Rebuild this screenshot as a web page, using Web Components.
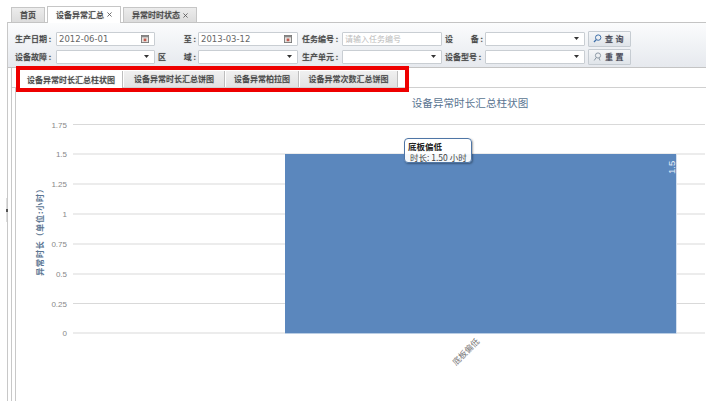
<!DOCTYPE html>
<html lang="zh">
<head>
<meta charset="utf-8">
<title>设备异常汇总</title>
<style>
    html, body { margin: 0; padding: 0; background: #fff; overflow: hidden; }
    body { font-family: "Noto Sans CJK SC", "Liberation Sans", sans-serif; font-size: 8px; color: #444; }
</style>
</head>
<body>
<app-shell>
    <top-tabs slot="tabs">
        <top-tab>首页</top-tab>
        <top-tab active closable>设备异常汇总</top-tab>
        <top-tab closable>异常时时状态</top-tab>
    </top-tabs>
    <query-bar slot="query"></query-bar>
    <chart-tabs slot="chart-tabs">
        <chart-tab active style="width:103px">设备异常时长汇总柱状图</chart-tab>
        <chart-tab style="width:101px">设备异常时长汇总饼图</chart-tab>
        <chart-tab style="width:73px">设备异常柏拉图</chart-tab>
        <chart-tab style="width:98px">设备异常次数汇总饼图</chart-tab>
    </chart-tabs>
    <bar-chart slot="chart"></bar-chart>
</app-shell>

<script>
const CJK = '"Noto Sans CJK SC", "Liberation Sans", sans-serif';
// the source shot is a downscaled one, so small text looks heavy and soft
const SOFT = "text-shadow: 0 0 1px rgba(60,60,60,.55);";

class AppShell extends HTMLElement {
    constructor() {
        super();
        this.attachShadow({ mode: "open" }).innerHTML = `
        <style>
            :host { display: block; position: relative; width: 710px; height: 401px; box-sizing: border-box; padding: 6px 4px 0 7px; overflow: hidden; }
            .panel { height: 379px; border-left: 1.5px solid #c8c8c8; display: flex; flex-direction: column; }
            .inner { flex: 1; margin-left: 3px; border-left: 1.5px solid #c8c8c8; display: flex; flex-direction: column; min-height: 0; }
            .body { flex: 1; margin-left: 3px; border-left: 1.5px solid #c8c8c8; min-height: 0; }
            /* splitter handle */
            .grip { position: absolute; left: 6px; top: 198px; width: 1px; height: 24px; background: #ddd; }
            .grip::after { content: ""; position: absolute; left: 0; top: 11px; width: 2px; height: 3px; background: #555; }
        </style>
        <slot name="tabs"></slot>
        <div class="panel">
            <slot name="query"></slot>
            <div class="inner">
                <slot name="chart-tabs"></slot>
                <div class="body"><slot name="chart"></slot></div>
            </div>
        </div>
        <div class="grip"></div>`;
    }
}

class TopTabs extends HTMLElement {
    constructor() {
        super();
        this.attachShadow({ mode: "open" }).innerHTML = `
        <style>
            :host { display: flex; height: 16px; gap: 2px; padding-left: 4px; position: relative; z-index: 1; align-items: flex-end; }
        </style>
        <slot></slot>`;
    }
}

class TopTab extends HTMLElement {
    constructor() {
        super();
        this.attachShadow({ mode: "open" }).innerHTML = `
        <style>
            :host { display: flex; box-sizing: border-box; height: 15px; padding: 0 8px; align-items: center; gap: 3px;
                border: 1px solid #c6c6c6; border-bottom: 0; background: linear-gradient(#ececec, #dcdcdc);
                font: 500 8px/1 ${CJK}; color: #444; white-space: nowrap; ${SOFT} }
            :host([active]) { height: 17px; background: #fff; margin-bottom: -1px; padding-bottom: 1px; }
            .x { display: none; width: 5px; height: 5px; }
            :host([closable]) .x { display: block; }
        </style>
        <slot></slot>
        <svg class="x" viewBox="0 0 6 6"><path d="M.5 .5l5 5M5.5 .5l-5 5" stroke="#555" stroke-width="1" fill="none"/></svg>`;
    }
}

class QueryField extends HTMLElement {
    constructor() {
        super();
        const kind = this.getAttribute("kind") || "text";
        const value = this.getAttribute("value") || "";
        const hint = this.getAttribute("hint") || "";
        let tail = "";
        if (kind === "date") {
            tail = `<svg width="8" height="8" viewBox="0 0 9 9"><rect x=".5" y=".5" width="8" height="8" fill="#e8e4e0" stroke="#777"/><rect x="1" y="1" width="7" height="1.6" fill="#8a8a8a"/><rect x="3" y="4" width="3" height="3" fill="#c05a50"/></svg>`;
        } else if (kind === "select") {
            tail = `<svg width="5" height="3" viewBox="0 0 5 3"><path d="M0 0h5L2.5 3z" fill="#333"/></svg>`;
        }
        this.attachShadow({ mode: "open" }).innerHTML = `
        <style>
            :host { display: flex; box-sizing: border-box; height: 14px; align-items: center; justify-content: space-between;
                padding: 0 5px 0 2px; background: #fff; border: 1px solid #c9ced3; border-radius: 1px; }
            .v { font: 8.5px "DejaVu Sans", sans-serif; color: #666; white-space: nowrap; }
            .h { font: 8px ${CJK}; color: #bbb; white-space: nowrap; }
            svg { display: block; }
        </style>
        <span class="${hint ? "h" : "v"}">${hint || value}</span>${tail}`;
    }
}

class QueryButton extends HTMLElement {
    constructor() {
        super();
        const reset = this.hasAttribute("reset");
        const icon = reset
            ? `<svg width="9" height="9" viewBox="0 0 9 9"><circle cx="5" cy="3.5" r="2.6" fill="none" stroke="#8d9aa6" stroke-width="1"/><path d="M3.2 5.5L1.2 8.5M6 6l1 2.5" stroke="#8d9aa6" stroke-width="1" fill="none"/></svg>`
            : `<svg width="9" height="9" viewBox="0 0 9 9"><circle cx="5.2" cy="3.6" r="2.7" fill="none" stroke="#3d6ea8" stroke-width="1"/><path d="M3.3 5.6L1 8" stroke="#3d6ea8" stroke-width="1.3" fill="none"/></svg>`;
        this.attachShadow({ mode: "open" }).innerHTML = `
        <style>
            :host { display: flex; box-sizing: border-box; height: 16px; width: 43px; margin-left: 3px; align-items: center; gap: 3px; padding-left: 4px;
                border: 1px solid #c6ccd2; background: linear-gradient(#f4f6f8, #dfe4e9); border-radius: 1px;
                font: 500 8px/1 ${CJK}; color: #445; letter-spacing: 2.5px; white-space: nowrap; ${SOFT} }
            svg { display: block; }
        </style>
        ${icon}<slot></slot>`;
    }
}

class QueryBar extends HTMLElement {
    constructor() {
        super();
        const label = (text, cls = "") => `<label class="${cls}">${text}</label>`;
        this.attachShadow({ mode: "open" }).innerHTML = `
        <style>
            :host { display: grid; box-sizing: border-box; height: 46px; padding: 8px 0 0 7px; row-gap: 3px;
                grid-template-columns: 41px 99px 43px 100px 44px 100px 43px 100px 46px;
                grid-auto-rows: 15px; align-items: center;
                background: linear-gradient(#fbfcfd, #e6e9ee);
                border-top: 1.5px solid #c4c4c4; border-bottom: 1.5px solid #c4c4c4; }
            label { font: 500 8px/1 ${CJK}; color: #444; white-space: nowrap; display: flex; ${SOFT} }
            label.r { justify-content: flex-end; padding-right: 2px; }
            label.s { padding-left: 3px; padding-right: 2px; justify-content: space-between; }
            label.p { padding-left: 4px; }
        </style>
        ${label("生产日期 :")}<query-field kind="date" value="2012-06-01"></query-field>
        ${label("至 :", "r")}<query-field kind="date" value="2013-03-12"></query-field>
        ${label("任务编号 :", "p")}<query-field hint="请输入任务编号"></query-field>
        ${label("<span>设</span><span>备 :</span>", "s")}<query-field kind="select"></query-field>
        <query-button>查询</query-button>
        ${label("设备故障 :")}<query-field kind="select"></query-field>
        ${label("<span>区</span><span>域 :</span>", "s")}<query-field kind="select"></query-field>
        ${label("生产单元 :", "p")}<query-field kind="select"></query-field>
        ${label("设备型号 :", "s")}<query-field kind="select"></query-field>
        <query-button reset>重置</query-button>`;
    }
}

class ChartTabs extends HTMLElement {
    constructor() {
        super();
        this.attachShadow({ mode: "open" }).innerHTML = `
        <style>
            :host { display: flex; position: relative; box-sizing: border-box; height: 19.5px; padding: 3px 0 0 8px; gap: 1px; border-bottom: 1.5px solid #d0d0d0; }
            /* red annotation drawn on the screenshot */
            .mark { position: absolute; left: 4px; top: -2px; width: 393px; height: 26px; box-sizing: border-box; border: 4.5px solid #ee0000; pointer-events: none; }
        </style>
        <slot></slot>
        <div class="mark"></div>`;
    }
}

class ChartTab extends HTMLElement {
    constructor() {
        super();
        this.attachShadow({ mode: "open" }).innerHTML = `
        <style>
            :host { display: flex; box-sizing: border-box; height: 16px; align-items: center; justify-content: center; background: linear-gradient(#f0f0f0, #e2e2e2);
                border-right: 1px solid #bdbdbd; font: 500 8px/1 ${CJK}; color: #444; white-space: nowrap; ${SOFT} }
            :host([active]) { background: #fff; height: 17px; }
        </style>
        <slot></slot>`;
    }
}

class BarChart extends HTMLElement {
    constructor() {
        super();
        const ticks = [["1.75", 124.5], ["1.5", 154], ["1.25", 184], ["1", 214], ["0.75", 244], ["0.5", 274], ["0.25", 303.5], ["0", 333]];
        const rows = ticks.map(([t, y]) => `
            <line x1="73" x2="705" y1="${y}" y2="${y}" stroke="#d9d9d9"/>
            <text x="67" y="${y + 3}" text-anchor="end" class="tick">${t}</text>`).join("");
        this.attachShadow({ mode: "open" }).innerHTML = `
        <style>
            :host { display: block; position: relative; width: 690px; height: 313px; }
            svg { display: block; }
            text { font-family: ${CJK}; }
            .tick { font: 8px "Liberation Sans", sans-serif; fill: #888; }
            .title { font-size: 10.6px; fill: #5a7491; }
            .axis { font-size: 8px; font-weight: 700; letter-spacing: .8px; fill: #5a7491; }
            .cat { font-size: 8.5px; fill: #777; }
            .val { font: 9.5px "Liberation Sans", sans-serif; fill: #e6eef8; }
            .tip { position: absolute; left: 388px; top: 50px; width: 68px; height: 25px; box-sizing: border-box; padding: 2.5px 0 0 3px;
                background: rgba(255,255,255,.94); border: 1.5px solid #4f76a6; border-radius: 4px; box-shadow: 1px 1px 2px rgba(0,0,0,.35);
                font: 8.5px/10.5px ${CJK}; color: #444; white-space: nowrap; }
            .tip b { display: block; color: #222; font-weight: 700; }
            .tip span { padding-left: 2px; }
        </style>
        <svg width="690" height="313" viewBox="16 88 690 313">
            <text x="470" y="107" text-anchor="middle" class="title">设备异常时长汇总柱状图</text>
            <text transform="translate(43 230) rotate(-90)" text-anchor="middle" class="axis">异常时长（单位:小时）</text>
            ${rows}
            <rect x="285" y="154" width="391" height="179" fill="#5b87bd"/>
            <line x1="285" x2="676" y1="333.5" y2="333.5" stroke="#b9cde4"/>
            <line x1="676.5" x2="676.5" y1="154" y2="334" stroke="#d5e0ee"/>
            <text transform="translate(675 174) rotate(-90)" class="val">1.5</text>
            <text transform="translate(480 342) rotate(-45)" text-anchor="end" class="cat">底板偏低</text>
        </svg>
        <div class="tip"><b>底板偏低</b><span>时长: 1.50 小时</span></div>`;
    }
}

customElements.define("app-shell", AppShell);
customElements.define("top-tabs", TopTabs);
customElements.define("top-tab", TopTab);
customElements.define("query-field", QueryField);
customElements.define("query-button", QueryButton);
customElements.define("query-bar", QueryBar);
customElements.define("chart-tabs", ChartTabs);
customElements.define("chart-tab", ChartTab);
customElements.define("bar-chart", BarChart);
</script>
</body>
</html>
